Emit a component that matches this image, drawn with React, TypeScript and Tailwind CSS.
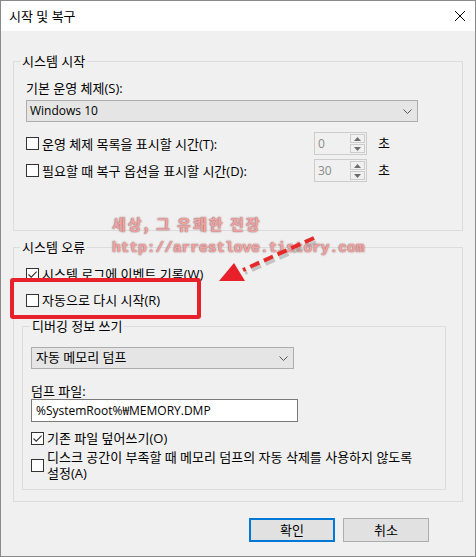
import React from "react";

function CheckBox({ checked }: { checked?: boolean }) {
  return (
    <span className="flex h-[13px] w-[13px] shrink-0 items-center justify-center border border-[#333333] bg-white">
      {checked && (
        <svg width="11" height="11" viewBox="0 0 11 11">
          <path d="M1.5 5.5 L4.2 8.2 L9.6 2.6" fill="none" stroke="#333333" strokeWidth="1.1" />
        </svg>
      )}
    </span>
  );
}

function Chevron() {
  return (
    <svg width="9" height="5" viewBox="0 0 9 5">
      <path d="M0.5 0.5 L4.5 4.5 L8.5 0.5" fill="none" stroke="#555555" strokeWidth="1" />
    </svg>
  );
}

function Spinner({ value }: { value: string }) {
  return (
    <div className="flex h-[23px] w-[53px] border border-[#cccccc] bg-[#f0f0f0]">
      <span className="flex-1 pl-[3px] text-[12px] leading-[21px] text-[#8a8a8a]">{value}</span>
      <div className="flex w-[17px] flex-col gap-[1px] p-[1px]">
        <div className="flex flex-1 items-center justify-center border border-[#cccccc] bg-[#f0f0f0]">
          <svg width="7" height="4" viewBox="0 0 7 4">
            <path d="M3.5 0 L7 4 L0 4 Z" fill="#6d6d6d" />
          </svg>
        </div>
        <div className="flex flex-1 items-center justify-center border border-[#cccccc] bg-[#f0f0f0]">
          <svg width="7" height="4" viewBox="0 0 7 4">
            <path d="M0 0 L7 0 L3.5 4 Z" fill="#6d6d6d" />
          </svg>
        </div>
      </div>
    </div>
  );
}

function Row({ checked, label }: { checked?: boolean; label: React.ReactNode }) {
  return (
    <div className="flex items-center gap-[3px] leading-[16px]">
      <CheckBox checked={checked} />
      <span>{label}</span>
    </div>
  );
}

export default function App() {
  return (
    <div className="relative flex h-[557px] w-[476px] flex-col border border-[#8a8a8a] bg-[#f0f0f0] text-[13px] text-black font-['Open_Sans','Noto_Sans_CJK_KR',sans-serif]">
      {/* title bar */}
      <div className="flex h-[30px] items-center justify-between bg-white pl-[8px] pr-[10px]">
        <span className="leading-[16px]">시작 및 복구</span>
        <svg width="10" height="10" viewBox="0 0 10 10">
          <path d="M0 0 L10 10 M10 0 L0 10" stroke="#000" strokeWidth="1" />
        </svg>
      </div>

      {/* 시스템 시작 */}
      <fieldset className="mx-[12px] mt-[22px] border border-[#dcdcdc]">
        <legend className="ml-[6px] px-[2px] leading-[16px]">시스템 시작</legend>
        <div className="px-[12px] pb-[48px] pt-[11px]">
          <div className="leading-[16px]">기본 운영 체제(S):</div>
          <div className="mt-[4px] flex h-[22px] w-[392px] items-center justify-between border border-[#adadad] bg-[#e5e5e5] pl-[3px] pr-[5px]">
            <span className="text-[12px]">Windows 10</span>
            <Chevron />
          </div>
          <div className="mt-[10px] grid grid-cols-[288px_53px_auto] items-center">
            <Row label="운영 체제 목록을 표시할 시간(T):" />
            <Spinner value="0" />
            <span className="pl-[11px]">초</span>
          </div>
          <div className="mt-[4px] grid grid-cols-[288px_53px_auto] items-center">
            <Row label="필요할 때 복구 옵션을 표시할 시간(D):" />
            <Spinner value="30" />
            <span className="pl-[11px]">초</span>
          </div>
        </div>
      </fieldset>

      {/* 시스템 오류 */}
      <fieldset className="mx-[12px] mt-[8px] border border-[#dcdcdc]">
        <legend className="ml-[6px] px-[2px] leading-[16px]">시스템 오류</legend>
        <div className="pb-[11px] pl-[8px] pr-[16px] pt-[11px]">
          <div className="pl-[4px]">
            <Row checked label="시스템 로그에 이벤트 기록(W)" />
          </div>
          <div className="mt-[10px] pl-[4px]">
            <Row label="자동으로 다시 시작(R)" />
          </div>

          <fieldset className="mt-[10px] border border-[#dcdcdc]">
            <legend className="ml-[7px] px-[2px] leading-[16px]">디버깅 정보 쓰기</legend>
            <div className="px-[8px] pb-[8px] pt-[13px]">
              <div className="flex h-[22px] w-[263px] items-center justify-between border border-[#adadad] bg-[#e5e5e5] pl-[4px] pr-[5px]">
                <span>자동 메모리 덤프</span>
                <Chevron />
              </div>
              <div className="mt-[14px] leading-[16px]">덤프 파일:</div>
              <div className="flex h-[23px] w-[267px] items-center border border-[#7a7a7a] bg-white pl-[4px] text-[12px]">
                %SystemRoot%₩MEMORY.DMP
              </div>
              <div className="mt-[8px]">
                <Row checked label="기존 파일 덮어쓰기(O)" />
              </div>
              <div className="mt-[3px]">
                <Row
                  label={
                    <>
                      디스크 공간이 부족할 때 메모리 덤프의 자동 삭제를 사용하지 않도록
                      <br />
                      설정(A)
                    </>
                  }
                />
              </div>
            </div>
          </fieldset>
        </div>
      </fieldset>

      {/* buttons */}
      <div className="mt-[16px] flex gap-[8px] pl-[248px]">
        <button className="h-[24px] w-[86px] border-2 border-[#0078d7] bg-[#e1e1e1] leading-[16px]">확인</button>
        <button className="h-[24px] w-[86px] border border-[#adadad] bg-[#e1e1e1] leading-[16px]">취소</button>
      </div>

      {/* red highlight box */}
      <div className="absolute left-[9px] top-[277px] h-[41px] w-[191px] rounded-[3px] border-4 border-[#e8202a]" />

      {/* watermark */}
      <div className="pointer-events-none absolute left-[111px] top-[212px] text-[15px] font-bold leading-[22px] tracking-[2px] text-[#f2a4a4] font-['Noto_Sans_CJK_KR',sans-serif] [text-shadow:0_0_2px_#9a7070,0_0_1px_#9a7070]">
        세상, 그 유쾌한 전장
      </div>
      <div className="pointer-events-none absolute left-[111px] top-[236px] text-[14.5px] font-bold leading-[22px] text-[#f2a4a4] font-['Liberation_Mono',monospace] [text-shadow:0_0_2px_#9a7070,0_0_1px_#9a7070]">
        http://arrestlove.tistory.com
      </div>

      {/* dashed arrow */}
      <svg className="pointer-events-none absolute left-0 top-0" width="476" height="557" viewBox="0 0 476 557">
        <path d="M314 239 L243 270" stroke="#9a9a9a" strokeWidth="4" strokeDasharray="10 5" opacity="0.5" transform="translate(1 2)" />
        <path d="M313 237 L242 269" stroke="#e52a2a" strokeWidth="4" strokeDasharray="10 5" />
        <path d="M218 280 L233 262 L244 280 Z" fill="#e8202a" />
      </svg>
    </div>
  );
}
